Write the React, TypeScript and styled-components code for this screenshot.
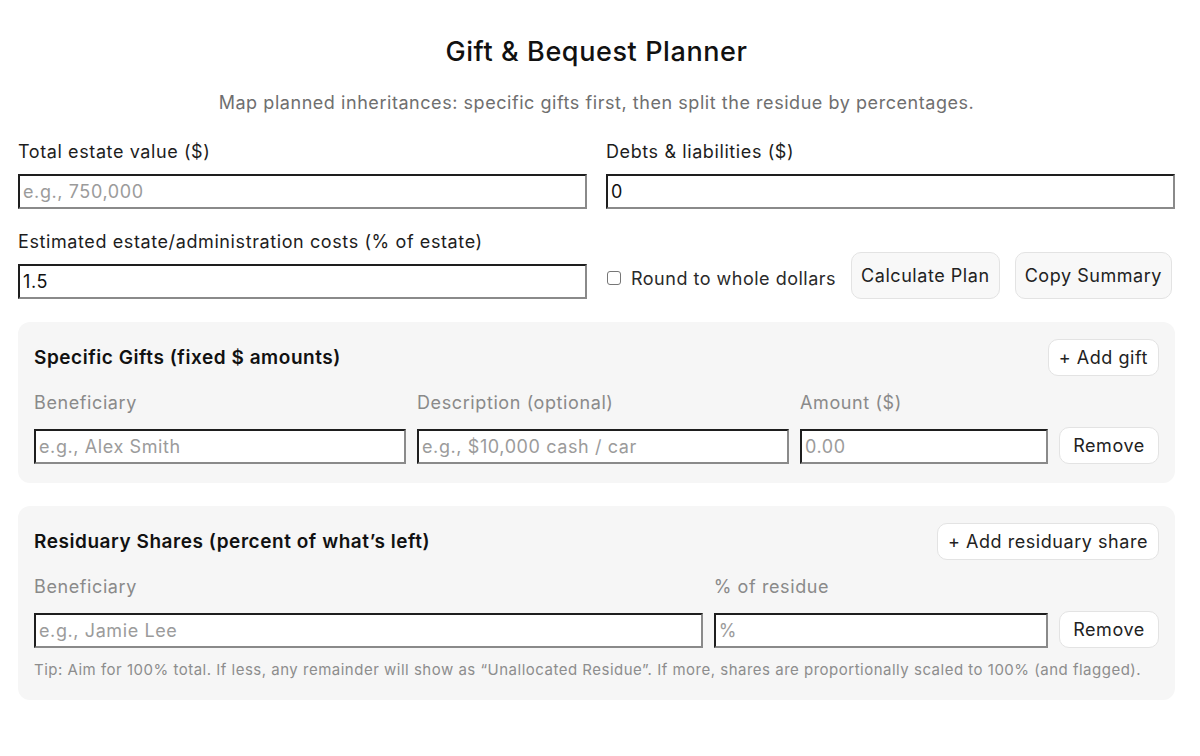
import styled, { createGlobalStyle } from 'styled-components';

const GlobalStyle = createGlobalStyle`
  body {
    margin: 0;
    background: #fff;
    font-family: Inter, 'Noto Sans', sans-serif;
    font-size: 18px;
    letter-spacing: 0.6px;
    color: #1a1a1a;
  }
  * { box-sizing: border-box; }
`;

const Page = styled.main`
  padding: 35px 25px 40px 18px;
`;

const Title = styled.h1`
  margin: 0;
  text-align: center;
  font-size: 27px;
  font-weight: 500;
  line-height: 34px;
  color: #111;
`;

const Subtitle = styled.p`
  margin: 23px 0 27px;
  text-align: center;
  font-size: 18px;
  letter-spacing: 0.55px;
  line-height: 22px;
  color: #6f6f6f;
`;

const TopGrid = styled.div`
  display: grid;
  grid-template-columns: 1fr 1fr;
  column-gap: 19px;
  row-gap: 22px;
  margin-bottom: 1px;
`;

const Field = styled.label<{ $loose?: boolean }>`
  display: flex;
  flex-direction: column;
  gap: ${(p) => (p.$loose ? '15px' : '11px')};
`;

const FieldLabel = styled.span<{ $muted?: boolean }>`
  font-size: 18px;
  line-height: 22px;
  color: ${(p) => (p.$muted ? '#8a8a8a' : '#1d1d1d')};
`;

const Input = styled.input`
  width: 100%;
  height: 35px;
  padding: 0 3px;
  font: inherit;
  font-size: 18px;
  letter-spacing: 0.6px;
  color: #111;
  background: #fff;
  border-style: solid;
  border-width: 2px;
  border-color: #1e1e1e #8a8a8a #8a8a8a #1e1e1e;
  border-radius: 0;
  outline: none;

  &::placeholder {
    color: #9b9b9b;
  }
`;

const Actions = styled.div`
  display: flex;
  align-items: flex-end;
  gap: 15px;
`;

const CheckLabel = styled.label`
  display: flex;
  align-items: center;
  flex-shrink: 0;
  gap: 10px;
  white-space: nowrap;
  letter-spacing: 0.5px;
  color: #2a2a2a;
  align-self: center;
  margin-top: 26px;
`;

const Box = styled.input`
  width: 14px;
  height: 14px;
  margin: 0 0 0 1px;
  appearance: none;
  border: 1px solid #767676;
  border-radius: 3px;
  background: #fff;
`;

const Button = styled.button<{ $tall?: boolean; $white?: boolean }>`
  flex-shrink: 0;
  font: inherit;
  font-size: 18px;
  letter-spacing: 0.55px;
  color: #222;
  background: ${(p) => (p.$white ? '#fff' : '#f8f8f8')};
  border: 1px solid #e3e3e3;
  border-radius: 10px;
  padding: ${(p) => (p.$tall ? '0 9px' : '0 10px')};
  height: ${(p) => (p.$tall ? '47px' : '37px')};
  white-space: nowrap;
  cursor: pointer;
`;

const Card = styled.section`
  margin-top: 23px;
  background: #f6f6f6;
  border-radius: 12px;
  padding: 17px 16px 19px;
`;

const CardHead = styled.div`
  display: flex;
  align-items: center;
  justify-content: space-between;
  margin-bottom: 16px;
`;

const CardTitle = styled.h2`
  margin: 0;
  font-size: 19px;
  letter-spacing: 0.55px;
  font-weight: 600;
  color: #111;
`;

const Row = styled.div<{ $cols: string }>`
  display: grid;
  grid-template-columns: ${(p) => p.$cols};
  column-gap: 11px;
  align-items: end;
`;

const Tip = styled.p`
  margin: 11px 0 0;
  font-size: 15px;
  letter-spacing: 0.5px;
  line-height: 22px;
  color: #8d8d8d;
`;

export default function App() {
  return (
    <>
      <GlobalStyle />
      <Page>
        <Title>Gift &amp; Bequest Planner</Title>
        <Subtitle>
          Map planned inheritances: specific gifts first, then split the residue by percentages.
        </Subtitle>

        <TopGrid>
          <Field>
            <FieldLabel>Total estate value ($)</FieldLabel>
            <Input placeholder="e.g., 750,000" />
          </Field>
          <Field>
            <FieldLabel>Debts &amp; liabilities ($)</FieldLabel>
            <Input defaultValue="0" />
          </Field>
          <Field>
            <FieldLabel>Estimated estate/administration costs (% of estate)</FieldLabel>
            <Input defaultValue="1.5" />
          </Field>
          <Actions>
            <CheckLabel>
              <Box type="checkbox" />
              Round to whole dollars
            </CheckLabel>
            <Button $tall>Calculate Plan</Button>
            <Button $tall>Copy Summary</Button>
          </Actions>
        </TopGrid>

        <Card>
          <CardHead>
            <CardTitle>Specific Gifts (fixed $ amounts)</CardTitle>
            <Button $white>+ Add gift</Button>
          </CardHead>
          <Row $cols="3fr 3fr 2fr 100px">
            <Field $loose>
              <FieldLabel $muted>Beneficiary</FieldLabel>
              <Input placeholder="e.g., Alex Smith" />
            </Field>
            <Field $loose>
              <FieldLabel $muted>Description (optional)</FieldLabel>
              <Input placeholder="e.g., $10,000 cash / car" />
            </Field>
            <Field $loose>
              <FieldLabel $muted>Amount ($)</FieldLabel>
              <Input placeholder="0.00" />
            </Field>
            <Button $white>Remove</Button>
          </Row>
        </Card>

        <Card>
          <CardHead>
            <CardTitle>Residuary Shares (percent of what’s left)</CardTitle>
            <Button $white>+ Add residuary share</Button>
          </CardHead>
          <Row $cols="2fr 1fr 100px">
            <Field $loose>
              <FieldLabel $muted>Beneficiary</FieldLabel>
              <Input placeholder="e.g., Jamie Lee" />
            </Field>
            <Field $loose>
              <FieldLabel $muted>% of residue</FieldLabel>
              <Input placeholder="%" />
            </Field>
            <Button $white>Remove</Button>
          </Row>
          <Tip>
            Tip: Aim for 100% total. If less, any remainder will show as “Unallocated Residue”. If
            more, shares are proportionally scaled to 100% (and flagged).
          </Tip>
        </Card>
      </Page>
    </>
  );
}
